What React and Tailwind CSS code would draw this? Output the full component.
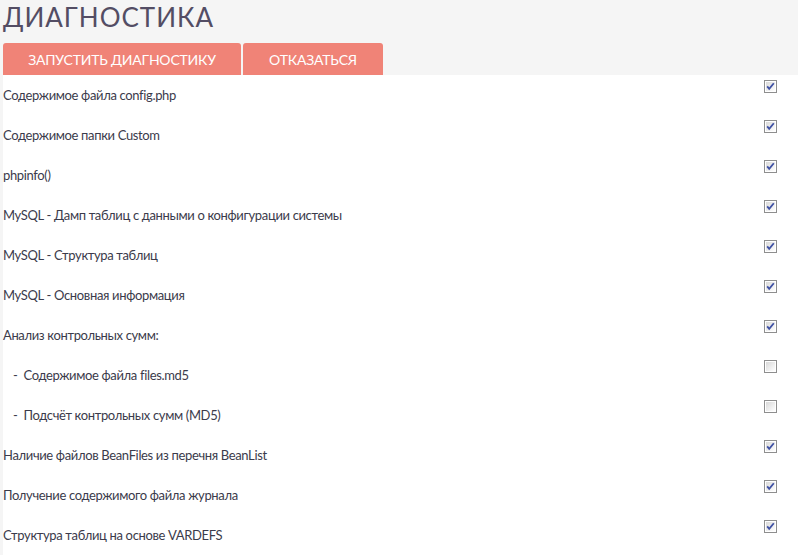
import React from 'react'

const items = [
  { label: 'Содержимое файла config.php', checked: true },
  { label: 'Содержимое папки Custom', checked: true },
  { label: 'phpinfo()', checked: true },
  { label: 'MySQL - Дамп таблиц с данными о конфигурации системы', checked: true },
  { label: 'MySQL - Структура таблиц', checked: true },
  { label: 'MySQL - Основная информация', checked: true },
  { label: 'Анализ контрольных сумм:', checked: true },
  { label: 'Содержимое файла files.md5', checked: false, sub: true },
  { label: 'Подсчёт контрольных сумм (MD5)', checked: false, sub: true },
  { label: 'Наличие файлов BeanFiles из перечня BeanList', checked: true },
  { label: 'Получение содержимого файла журнала', checked: true },
  { label: 'Структура таблиц на основе VARDEFS', checked: true },
]

// classic-looking checkbox
function Check({ checked }) {
  return (
    <svg width="13" height="13" viewBox="0 0 13 13" className="block">
      <defs>
        <linearGradient id={checked ? 'cbOn' : 'cbOff'} x1="0" y1="0" x2="1" y2="1">
          <stop offset="0" stopColor="#d8d8d8" />
          <stop offset="1" stopColor="#ffffff" />
        </linearGradient>
      </defs>
      <rect x="0.5" y="0.5" width="12" height="12" fill="#fff" stroke="#8e8e8e" />
      <rect x="2" y="2" width="9" height="9" fill={`url(#${checked ? 'cbOn' : 'cbOff'})`} />
      {checked && (
        <path d="M3.2 6.4 L5.2 8.8 L9.8 3.2" fill="none" stroke="#3f51a4" strokeWidth="1.8" />
      )}
    </svg>
  )
}

export default function App() {
  return (
    <div className="min-h-[555px] bg-[#f5f5f5] pl-[3px]" style={{ fontFamily: 'Lato, "Open Sans", sans-serif' }}>
      {/* Title */}
      <h1 className="h-[43px] pt-[1px] text-[26px] leading-[32px] font-normal tracking-[1px] text-[#534d64]">
        ДИАГНОСТИКА
      </h1>

      {/* Buttons */}
      <div className="flex gap-[2px] h-[32px]">
        <button className="w-[238px] rounded-t-[3px] bg-[#f08377] text-white text-[14px] font-normal tracking-[-0.2px]">
          ЗАПУСТИТЬ ДИАГНОСТИКУ
        </button>
        <button className="w-[140px] rounded-t-[3px] bg-[#f08377] text-white text-[14px] font-normal tracking-[-0.2px]">
          ОТКАЗАТЬСЯ
        </button>
      </div>

      {/* List */}
      <div className="bg-white">
        {items.map((it, i) => (
          <div key={i} className="flex h-[40px] justify-between">
            <div className="pt-[12px] text-[13px] leading-[16px] tracking-[-0.35px] text-[#3b3b4b]">
              {it.sub ? <span className="pl-[10px]">-&nbsp;&nbsp;{it.label}</span> : it.label}
            </div>
            <div className="pt-[5px] pr-[21px]">
              <Check checked={it.checked} />
            </div>
          </div>
        ))}
      </div>
    </div>
  )
}
